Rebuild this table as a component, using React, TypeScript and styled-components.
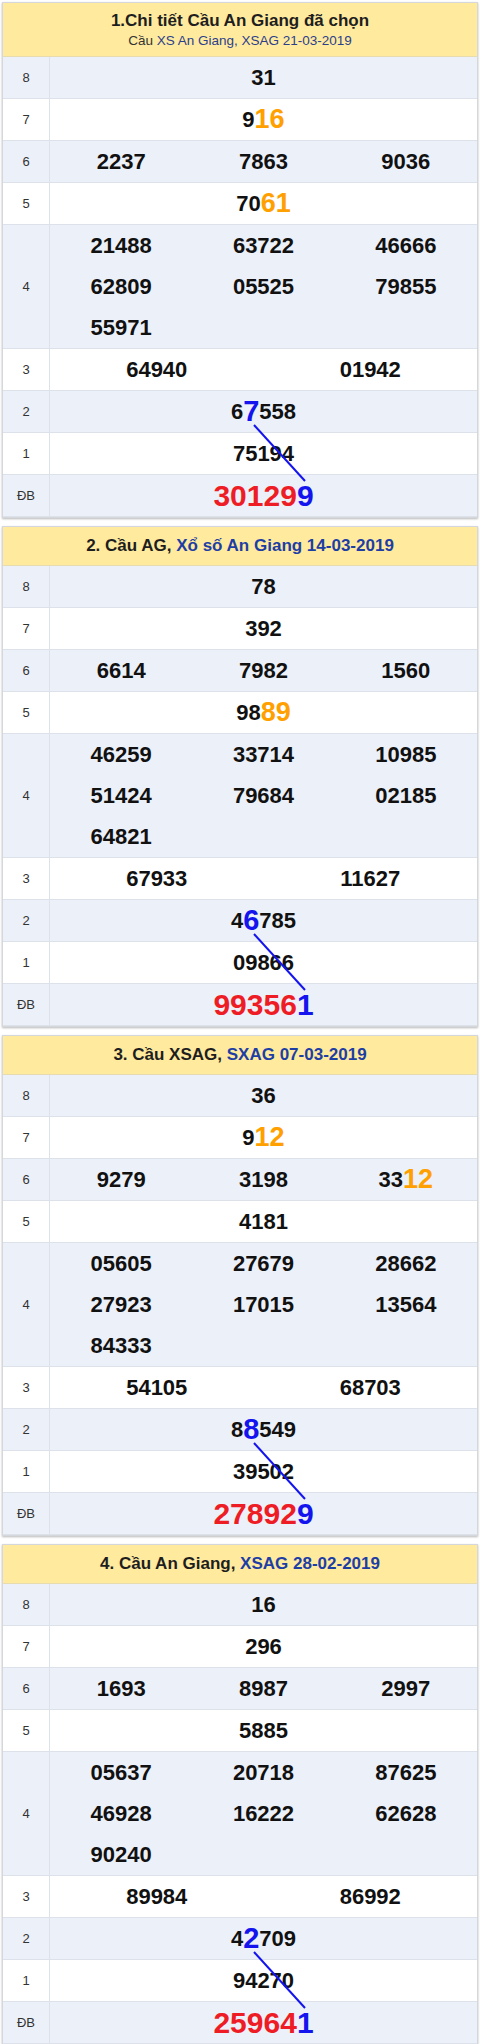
import React from "react";
import styled, { createGlobalStyle } from "styled-components";

const GlobalStyle = createGlobalStyle`
  html, body { margin: 0; padding: 0; background: #ffffff; }
  body { font-family: "Liberation Sans", Arial, sans-serif; }
`;

type Tone = "n" | "o" | "b" | "r";
type Part = { t: string; c: Tone };

const parse = (s: string, base: Tone = "n"): Part[] => {
  const out: Part[] = [];
  const re = /\{([obr])([^}]*)\}/g;
  let last = 0;
  let m: RegExpExecArray | null;
  while ((m = re.exec(s))) {
    if (m.index > last) out.push({ t: s.slice(last, m.index), c: base });
    out.push({ t: m[2], c: m[1] as Tone });
    last = m.index + m[0].length;
  }
  if (last < s.length) out.push({ t: s.slice(last), c: base });
  return out;
};

type CardData = {
  title: React.ReactNode;
  sub?: React.ReactNode;
  rows: { label: string; cols: number; values: string[]; special?: boolean }[];
};

const Page = styled.div`
  display: flex;
  flex-direction: column;
  gap: 8px;
  padding: 2px 2px 4px 2px;
`;

const Card = styled.section`
  border: 1px solid #d4d7dc;
  box-shadow: 0 1px 2px rgba(0, 0, 0, 0.28);
  background: #ffffff;
`;

const Header = styled.header<{ $tall?: boolean }>`
  background: #ffea9e;
  height: ${(p) => (p.$tall ? "54px" : "39px")};
  display: flex;
  flex-direction: column;
  align-items: center;
  justify-content: center;
  gap: 2px;
  border-bottom: 1px solid #e6dcb0;
  box-sizing: border-box;
`;

const Title = styled.div`
  font-size: 17px;
  font-weight: bold;
  color: #1e1e1e;
  line-height: 20px;
`;

const Sub = styled.div`
  font-size: 13.5px;
  color: #2c3f8c;
  line-height: 16px;
`;

const Dark = styled.span`
  color: #333333;
`;

const BlueLink = styled.span`
  color: #1d3ea5;
`;

const Row = styled.div<{ $alt: boolean }>`
  display: grid;
  grid-template-columns: 47px 1fr;
  background: ${(p) => (p.$alt ? "#ecf0f9" : "#ffffff")};
  border-bottom: 1px solid #dde2ea;
  &:last-child {
    border-bottom: none;
  }
`;

const Label = styled.div`
  display: flex;
  align-items: center;
  justify-content: center;
  font-size: 13px;
  color: #333333;
  border-right: 1px solid #dde2ea;
`;

const Values = styled.div<{ $cols: number }>`
  display: grid;
  grid-template-columns: repeat(${(p) => p.$cols}, 1fr);
`;

const Cell = styled.div`
  height: 41px;
  display: flex;
  align-items: center;
  justify-content: center;
  font-size: 22px;
  font-weight: bold;
  color: #111111;
  white-space: nowrap;
`;

const Digit = styled.span<{ $tone: Tone; $big?: boolean }>`
  color: ${(p) =>
    p.$tone === "o"
      ? "#ffa000"
      : p.$tone === "b"
      ? "#1414ee"
      : p.$tone === "r"
      ? "#ee1c25"
      : "#111111"};
  font-size: ${(p) =>
    p.$big ? "30px" : p.$tone === "o" ? "27px" : p.$tone === "b" ? "29px" : "22px"};
`;

const Linked = styled.div`
  position: relative;
`;

const Overlay = styled.svg`
  position: absolute;
  left: 0;
  top: 0;
  width: 100%;
  height: 100%;
  pointer-events: none;
  overflow: visible;
`;

const cards: CardData[] = [
  {
    title: "1.Chi tiết Cầu An Giang đã chọn",
    sub: (
      <>
        <Dark>Cầu</Dark> XS An Giang, XSAG 21-03-2019
      </>
    ),
    rows: [
      { label: "8", cols: 1, values: ["31"] },
      { label: "7", cols: 1, values: ["9{o16}"] },
      { label: "6", cols: 3, values: ["2237", "7863", "9036"] },
      { label: "5", cols: 1, values: ["70{o61}"] },
      { label: "4", cols: 3, values: ["21488", "63722", "46666", "62809", "05525", "79855", "55971"] },
      { label: "3", cols: 2, values: ["64940", "01942"] },
      { label: "2", cols: 1, values: ["6{b7}558"] },
      { label: "1", cols: 1, values: ["75194"] },
      { label: "ĐB", cols: 1, values: ["{r30129}{b9}"], special: true },
    ],
  },
  {
    title: (
      <>
        2. Cầu AG, <BlueLink>Xổ số An Giang 14-03-2019</BlueLink>
      </>
    ),
    rows: [
      { label: "8", cols: 1, values: ["78"] },
      { label: "7", cols: 1, values: ["392"] },
      { label: "6", cols: 3, values: ["6614", "7982", "1560"] },
      { label: "5", cols: 1, values: ["98{o89}"] },
      { label: "4", cols: 3, values: ["46259", "33714", "10985", "51424", "79684", "02185", "64821"] },
      { label: "3", cols: 2, values: ["67933", "11627"] },
      { label: "2", cols: 1, values: ["4{b6}785"] },
      { label: "1", cols: 1, values: ["09866"] },
      { label: "ĐB", cols: 1, values: ["{r99356}{b1}"], special: true },
    ],
  },
  {
    title: (
      <>
        3. Cầu XSAG, <BlueLink>SXAG 07-03-2019</BlueLink>
      </>
    ),
    rows: [
      { label: "8", cols: 1, values: ["36"] },
      { label: "7", cols: 1, values: ["9{o12}"] },
      { label: "6", cols: 3, values: ["9279", "3198", "33{o12}"] },
      { label: "5", cols: 1, values: ["4181"] },
      { label: "4", cols: 3, values: ["05605", "27679", "28662", "27923", "17015", "13564", "84333"] },
      { label: "3", cols: 2, values: ["54105", "68703"] },
      { label: "2", cols: 1, values: ["8{b8}549"] },
      { label: "1", cols: 1, values: ["39502"] },
      { label: "ĐB", cols: 1, values: ["{r27892}{b9}"], special: true },
    ],
  },
  {
    title: (
      <>
        4. Cầu An Giang, <BlueLink>XSAG 28-02-2019</BlueLink>
      </>
    ),
    rows: [
      { label: "8", cols: 1, values: ["16"] },
      { label: "7", cols: 1, values: ["296"] },
      { label: "6", cols: 3, values: ["1693", "8987", "2997"] },
      { label: "5", cols: 1, values: ["5885"] },
      { label: "4", cols: 3, values: ["05637", "20718", "87625", "46928", "16222", "62628", "90240"] },
      { label: "3", cols: 2, values: ["89984", "86992"] },
      { label: "2", cols: 1, values: ["4{b2}709"] },
      { label: "1", cols: 1, values: ["94270"] },
      { label: "ĐB", cols: 1, values: ["{r25964}{b1}"], special: true },
    ],
  },
];

const ResultRow: React.FC<{ row: CardData["rows"][number]; alt: boolean }> = ({ row, alt }) => (
  <Row $alt={alt}>
    <Label>{row.label}</Label>
    <Values $cols={row.cols}>
      {row.values.map((v, i) => (
        <Cell key={i}>
          {parse(v).map((p, j) => (
            <Digit key={j} $tone={p.c} $big={row.special}>
              {p.t}
            </Digit>
          ))}
        </Cell>
      ))}
    </Values>
  </Row>
);

const ResultCard: React.FC<{ data: CardData }> = ({ data }) => {
  const top = data.rows.slice(0, 6);
  const bottom = data.rows.slice(6);
  return (
    <Card>
      <Header $tall={!!data.sub}>
        <Title>{data.title}</Title>
        {data.sub && <Sub>{data.sub}</Sub>}
      </Header>
      {top.map((r, i) => (
        <ResultRow key={r.label} row={r} alt={i % 2 === 0} />
      ))}
      <Linked>
        {bottom.map((r, i) => (
          <ResultRow key={r.label} row={r} alt={(i + 6) % 2 === 0} />
        ))}
        <Overlay>
          <line x1={251} y1={34} x2={302} y2={90} stroke="#1414ee" strokeWidth={2} />
        </Overlay>
      </Linked>
    </Card>
  );
};

export default function App() {
  return (
    <>
      <GlobalStyle />
      <Page>
        {cards.map((c, i) => (
          <ResultCard key={i} data={c} />
        ))}
      </Page>
    </>
  );
}
